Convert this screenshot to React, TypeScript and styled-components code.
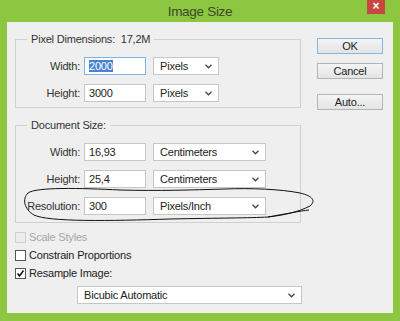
import React from 'react'
import styled, { createGlobalStyle } from 'styled-components'

const GlobalStyle = createGlobalStyle`
  html, body {
    margin: 0;
    padding: 0;
    background: #8dc641;
  }
  body {
    font-family: "Liberation Sans", Arial, sans-serif;
  }
`

const Window = styled.div`
  position: relative;
  width: 400px;
  height: 321px;
  background: #8dc641;
  display: flex;
  flex-direction: column;
  overflow: hidden;
`

const TitleBar = styled.div`
  height: 22px;
  display: grid;
  grid-template-columns: 1fr auto 1fr;
  align-items: start;
`

const Title = styled.div`
  grid-column: 2;
  font-size: 13.5px;
  letter-spacing: -0.3px;
  line-height: 23px;
  color: #3a4a2c;
`

const CloseButton = styled.div`
  justify-self: end;
  width: 18px;
  height: 14px;
  margin-right: 15px;
  background: #c9463f;
  color: #fff;
  font-size: 12px;
  font-weight: bold;
  line-height: 13px;
  text-align: center;
`

const DialogBody = styled.div`
  flex: 1;
  margin: 0 7px 8px;
  padding: 10px 0 0 8px;
  background: #efefef;
  display: flex;
  align-items: flex-start;
  color: #222;
  font-size: 11px;
  letter-spacing: -0.2px;
`

const LeftColumn = styled.div`
  width: 287px;
  display: flex;
  flex-direction: column;
`

const Group = styled.fieldset<{ $bottom: number; $top?: number }>`
  margin: ${({ $top = 0 }) => $top}px 0 0 0;
  width: 286px;
  box-sizing: border-box;
  padding: 11px 0 ${({ $bottom }) => $bottom}px 0;
  border: 1px solid #d0d0d0;
  display: flex;
  flex-direction: column;
  gap: 9px;
`

const Legend = styled.legend`
  margin-left: 11px;
  padding: 0 4px;
  line-height: 14px;
  color: #333;
`

const FieldRow = styled.div<{ $top?: number }>`
  display: flex;
  align-items: center;
  height: 18px;
  margin-top: ${({ $top = 0 }) => $top}px;
`

const Label = styled.div`
  width: 64px;
  text-align: right;
  color: #333;
`

const TextBox = styled.div<{ $focused?: boolean }>`
  margin-left: 4px;
  width: 62px;
  height: 18px;
  box-sizing: border-box;
  border: 1px solid ${({ $focused }) => ($focused ? '#7fb2e5' : '#c6c6c6')};
  background: #fff;
  padding-left: 4px;
  line-height: 16px;
`

const Selected = styled.span`
  background: #4a82d4;
  color: #fff;
`

const SelectBox = styled.div<{ $width: number; $left?: number }>`
  margin-left: ${({ $left = 7 }) => $left}px;
  width: ${({ $width }) => $width}px;
  height: 18px;
  box-sizing: border-box;
  border: 1px solid #c6c6c6;
  background: #fff;
  padding: 0 6px;
  display: flex;
  align-items: center;
  justify-content: space-between;
`

const Chevron = () => (
  <svg width="7" height="5" viewBox="0 0 7 5">
    <path d="M0.5 0.8 L3.5 3.8 L6.5 0.8" fill="none" stroke="#444" strokeWidth="1.3" />
  </svg>
)

const Select = ({ value, width, left }: { value: string; width: number; left?: number }) => (
  <SelectBox $width={width} $left={left}>
    <span>{value}</span>
    <Chevron />
  </SelectBox>
)

const CheckList = styled.div`
  margin-top: 5px;
  display: flex;
  flex-direction: column;
`

const CheckRow = styled.div<{ $disabled?: boolean }>`
  height: 18px;
  display: flex;
  align-items: center;
  gap: 3px;
  color: ${({ $disabled }) => ($disabled ? '#a6a6a6' : '#222')};
`

const Box = styled.div<{ $disabled?: boolean }>`
  width: 11px;
  height: 11px;
  box-sizing: border-box;
  border: 1px solid ${({ $disabled }) => ($disabled ? '#cfcfcf' : '#555')};
  background: ${({ $disabled }) => ($disabled ? '#ececec' : '#fff')};
  display: flex;
  align-items: center;
  justify-content: center;
`

const Check = () => (
  <svg width="9" height="9" viewBox="0 0 9 9">
    <path d="M1.5 4.5 L3.5 7 L7.5 1.5" fill="none" stroke="#111" strokeWidth="1.5" />
  </svg>
)

const ButtonColumn = styled.div`
  margin-left: 15px;
  width: 66px;
  display: flex;
  flex-direction: column;
`

const Button = styled.div<{ $gap: number; $primary?: boolean }>`
  margin-top: ${({ $gap }) => $gap}px;
  height: 16px;
  box-sizing: border-box;
  border: 1px solid ${({ $primary }) => ($primary ? '#86b6e2' : '#b4b4b4')};
  background: linear-gradient(#f4f4f4, #e4e4e4);
  text-align: center;
  line-height: 14px;
  color: #222;
`

const Annotation = styled.svg`
  position: absolute;
  left: 0;
  top: 0;
  pointer-events: none;
`

export default function App() {
  return (
    <>
      <GlobalStyle />
      <Window>
        <TitleBar>
          <Title>Image Size</Title>
          <CloseButton>×</CloseButton>
        </TitleBar>
        <DialogBody>
          <LeftColumn>
            <Group $bottom={5}>
              <Legend>Pixel Dimensions:&nbsp; 17,2M</Legend>
              <FieldRow>
                <Label>Width:</Label>
                <TextBox $focused><Selected>2000</Selected></TextBox>
                <Select value="Pixels" width={66} />
              </FieldRow>
              <FieldRow>
                <Label>Height:</Label>
                <TextBox>3000</TextBox>
                <Select value="Pixels" width={66} />
              </FieldRow>
            </Group>
            <Group $top={10} $bottom={7}>
              <Legend>Document Size:</Legend>
              <FieldRow>
                <Label>Width:</Label>
                <TextBox>16,93</TextBox>
                <Select value="Centimeters" width={113} />
              </FieldRow>
              <FieldRow>
                <Label>Height:</Label>
                <TextBox>25,4</TextBox>
                <Select value="Centimeters" width={113} />
              </FieldRow>
              <FieldRow>
                <Label>Resolution:</Label>
                <TextBox>300</TextBox>
                <Select value="Pixels/Inch" width={113} />
              </FieldRow>
            </Group>
            <CheckList>
              <CheckRow $disabled>
                <Box $disabled />
                Scale Styles
              </CheckRow>
              <CheckRow>
                <Box />
                Constrain Proportions
              </CheckRow>
              <CheckRow>
                <Box><Check /></Box>
                Resample Image:
              </CheckRow>
            </CheckList>
            <FieldRow $top={4}>
              <Select value="Bicubic Automatic" width={225} left={62} />
            </FieldRow>
          </LeftColumn>
          <ButtonColumn>
            <Button $gap={6} $primary>OK</Button>
            <Button $gap={9}>Cancel</Button>
            <Button $gap={15}>Auto...</Button>
          </ButtonColumn>
        </DialogBody>
        <Annotation width="400" height="321" viewBox="0 0 400 321">
          <path
            d="M120 190 C80 188 36 187 28 193 C22 199 24 209 34 215 C48 222 110 221 170 219 C220 218 250 218 268 217 C285 215 298 212 310 206 C316 201 313 196 300 193 C280 189 250 188 225 189 C190 190 160 191 120 190 M268 217 C285 214 300 211 309 210"
            fill="none"
            stroke="#111"
            strokeWidth="1"
          />
        </Annotation>
      </Window>
    </>
  )
}
